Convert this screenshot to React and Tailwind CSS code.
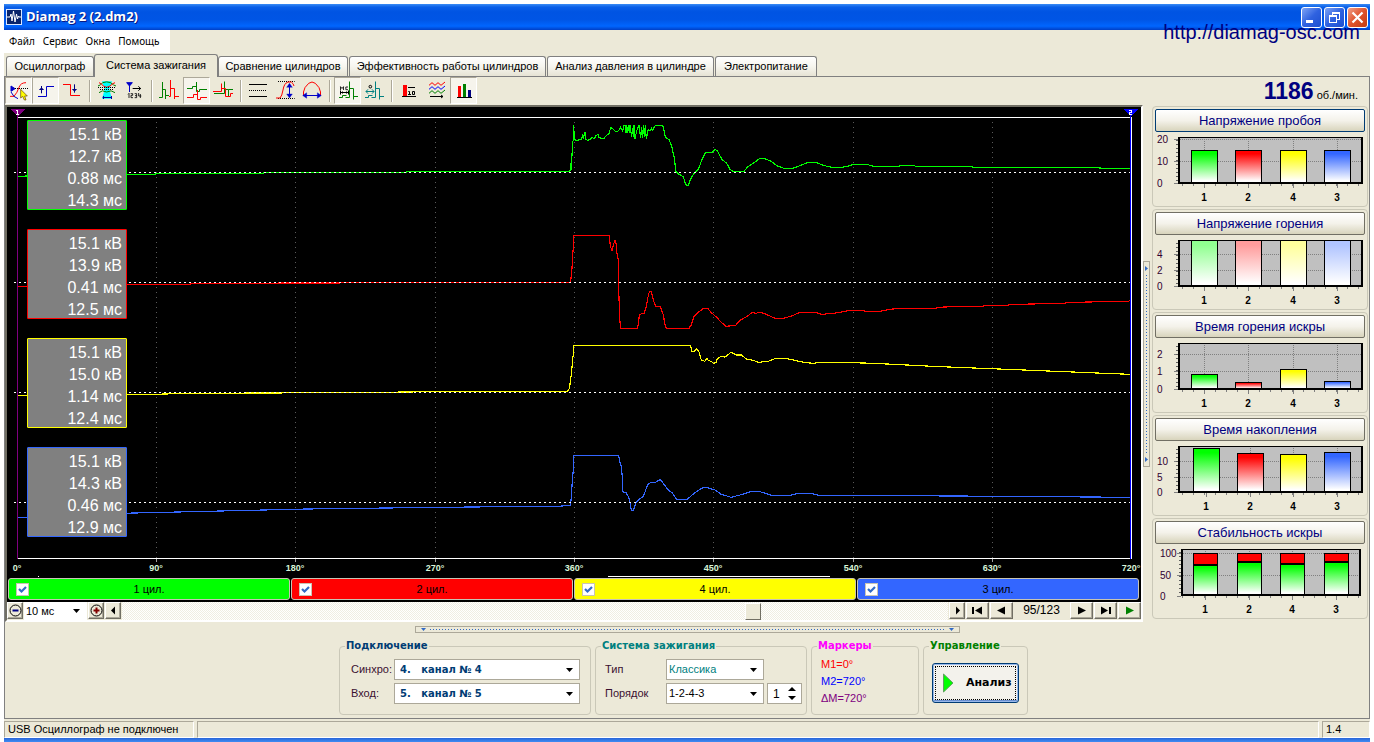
import React from "react";

const raised =
  "border border-t-white border-l-white border-r-[#716f64] border-b-[#716f64] bg-[#ece9d8] shadow-[inset_-1px_-1px_0_#aca899]";

/* ---------- title bar ---------- */

function TitleBar() {
  const base =
    "flex h-[21px] w-[21px] items-center justify-center rounded-[3px] border border-white";
  return (
    <header className="flex h-[26px] items-center bg-[linear-gradient(#3a8cf5_0%,#0a5fe8_12%,#0054e3_30%,#0055e5_60%,#0066ff_85%,#003fc6_100%)] pr-[2px] pl-[2px]">
      <svg className="h-4 w-4" viewBox="0 0 16 16" aria-hidden="true">
        <rect x="0.5" y="0.5" width="15" height="15" fill="#08246b" stroke="#dbe7ff" />
        <path d="M1 8H4L5 5L6 12L7.5 2L9 13L10.5 5L11.5 10L12.5 7L13 8H15" fill="none" stroke="#fff" />
      </svg>
      <h1 className="ml-1 grow font-['Open_Sans','Liberation_Sans',sans-serif] text-[13px] font-bold text-white [text-shadow:1px_1px_0_#0a1883]">
        Diamag 2 (2.dm2)
      </h1>
      <div className="flex gap-[2px]">
        <button aria-label="Свернуть" className={`${base} bg-[linear-gradient(135deg,#7fa4f5,#2f62e0_50%,#1d4fd0)]`}>
          <svg className="h-[19px] w-[19px]" viewBox="0 0 19 19">
            <rect x="4" y="12" width="7" height="3" fill="#fff" />
          </svg>
        </button>
        <button aria-label="Восстановить" className={`${base} bg-[linear-gradient(135deg,#7fa4f5,#2f62e0_50%,#1d4fd0)]`}>
          <svg className="h-[19px] w-[19px]" viewBox="0 0 19 19" fill="none" stroke="#fff" shapeRendering="crispEdges">
            <path d="M7.500 8V4.500H14.500V11.500H12M7 5H15" />
            <path d="M4.500 7.500H11.500V14.500H4.500ZM4 8.500H12" />
          </svg>
        </button>
        <button aria-label="Закрыть" className={`${base} bg-[linear-gradient(135deg,#f0a08a,#e0532c_50%,#c23b12)]`}>
          <svg className="h-[19px] w-[19px]" viewBox="0 0 19 19">
            <path d="M4.500 4.500L14.500 14.500M14.500 4.500L4.500 14.500" stroke="#fff" strokeWidth="2.200" />
          </svg>
        </button>
      </div>
    </header>
  );
}

/* ---------- tabs ---------- */

const TABS = [
  ["Осциллограф", "w-[88px]"],
  ["Система зажигания", "w-[124px]"],
  ["Сравнение цилиндров", "w-[130px]"],
  ["Эффективность работы цилиндров", "w-[197px]"],
  ["Анализ давления в цилиндре", "w-[167px]"],
  ["Электропитание", "w-[102px]"],
];

function Tabs() {
  return (
    <nav className="flex h-[23px] items-end pl-[2px]" role="tablist">
      {TABS.map(([name, width], i) => (
        <button
          key={name}
          role="tab"
          aria-selected={i === 1}
          className={`${width} rounded-t-[3px] border border-b-0 border-[#808080] text-[11px] whitespace-nowrap ${
            i === 1
              ? "relative z-10 -mb-px h-[23px] bg-[#ece9d8] pb-[2px]"
              : "h-[20px] bg-[linear-gradient(#ffffff,#f6f5ee_50%,#e6e3d4)]"
          } ${i > 2 ? "ml-[1px]" : ""}`}
        >
          {name}
        </button>
      ))}
    </nav>
  );
}

/* ---------- toolbar ---------- */

const RED = "#ff0000";
const BLUE = "#0000c8";
const GREEN = "#008000";
const TEAL = "#008080";

/* Icon art is drawn on a sheet with three units to the pixel. */
const ICONS = [
  {
    x: 5,
    label: "Курсор синхронизации",
    on: true,
    art: (
      <>
        <path d="M30 289H42Q52 278 57 262Q62 248 78 248" stroke={RED} />
        <path d="M33 276Q40 292 54 296" stroke={BLUE} />
        <path d="M45 265.500H84" stroke="#000" strokeDasharray="3 3" />
        <path d="M33 258L45 266L33 274Z" fill={BLUE} stroke={BLUE} />
        <path d="M62 268V294L68 289L73 300H78L74 288H82Z" fill="#ffff00" stroke="#604000" strokeWidth="2" />
      </>
    ),
  },
  {
    x: 32,
    label: "Передний фронт",
    on: true,
    art: (
      <>
        <path d="M114 289.500H139.500V259.500H162" stroke={BLUE} />
        <path d="M124.500 280V258M118 268.500H131M121 265.500H128" stroke="#000080" />
      </>
    ),
  },
  {
    x: 59,
    label: "Задний фронт",
    art: (
      <>
        <path d="M189 253.500H211.500V286.500H240" stroke={RED} />
        <path d="M223.500 253V278M217 268.500H230M220 271.500H227" stroke="#000080" />
      </>
    ),
  },
  null,
  {
    x: 94,
    label: "Наложение кадров",
    art: (
      <>
        <path d="M306 244H336L328 268L336 296H306L314 268Z" fill="#00ffff" stroke="none" />
        <path d="M294 258Q302 256 308 248Q320 243 332 248Q340 256 348 258" stroke={GREEN} />
        <path d="M297 248Q304 250 310 258Q320 266 330 258Q338 250 345 248" stroke={RED} />
        <path d="M294 262.500H348M300 268.500H342" stroke="#000" strokeDasharray="3 3" />
        <path d="M297 278Q306 268 320 276Q334 268 345 278" stroke={GREEN} />
        <path d="M308 292.500H336M310.500 288V297M334.500 288V297" stroke="#0000a0" />
      </>
    ),
  },
  {
    x: 121,
    label: "Порядок цилиндров",
    art: (
      <>
        <path d="M380 248H397L388.500 258Z" fill={BLUE} stroke={BLUE} />
        <path d="M388.500 256V276" stroke={BLUE} />
        <path d="M398 265.500H422M415 259L422 265.500L415 272" stroke="#000" />
        <path
          d="M384 283L387 280V294M392 281H398V286H393V293H399M404 281H410V293H404M405 287H410M416 279V288H424M421 282V294"
          stroke="#000"
          strokeWidth="2.500"
        />
      </>
    ),
  },
  null,
  {
    x: 156,
    label: "Парад",
    art: (
      <>
        <path d="M477 292.500H487.500V246M487.500 268.500H496.500V297M496.500 286.500H507" stroke={GREEN} />
        <path d="M507 289.500H511.500V240M511.500 265.500H523.500V297M523.500 289.500H537" stroke={RED} />
      </>
    ),
  },
  {
    x: 183,
    label: "Растр",
    on: true,
    art: (
      <>
        <path d="M561 265.500H577.500V259.500H589.500M589.500 246V274.500H598.500V268.500H621" stroke={GREEN} />
        <path d="M561 292.500H580.500V283.500H592.500M592.500 270V298.500H601.500V292.500H621" stroke={RED} />
      </>
    ),
  },
  {
    x: 210,
    label: "Суперпозиция",
    art: (
      <>
        <path d="M642 280.500H673.500V244.500M673.500 268.500H685.500V289.500M685.500 268.500H699" stroke={GREEN} />
        <path d="M639 274.500H664.500V250.500M664.500 265.500H676.500V289.500H691.500V280.500H699" stroke={RED} />
      </>
    ),
  },
  null,
  {
    x: 245,
    label: "Пределы",
    art: (
      <>
        <path d="M747 253.500H801M747 289.500H801" stroke="#000" />
        <path d="M747 271.500H801" stroke="#000" strokeDasharray="3 3" />
      </>
    ),
  },
  {
    x: 272,
    label: "Масштаб по вертикали",
    art: (
      <>
        <path d="M834 244.500H884M834 295.500H884" stroke="#000" strokeDasharray="3 3" />
        <path d="M828 294H840Q846 288 849 270Q852 250 864 246H874Q880 250 882 258" stroke={RED} />
        <path d="M868.500 254V288" stroke={BLUE} />
        <path d="M860 262L868.500 250L877 262ZM860 282L868.500 294L877 282Z" fill={BLUE} stroke={BLUE} strokeWidth="1" />
      </>
    ),
  },
  {
    x: 299,
    label: "Масштаб по горизонтали",
    art: (
      <>
        <path d="M910.500 288V276Q912 262 926 250L936 246L946 250Q960 262 961.500 276V288" stroke={RED} />
        <path d="M918 286.500H954" stroke={BLUE} />
        <path d="M920 278L908 286.500L920 295ZM952 278L964 286.500L952 295Z" fill={BLUE} stroke={BLUE} strokeWidth="1" />
      </>
    ),
  },
  null,
  {
    x: 334,
    label: "Измерение в миллисекундах",
    on: true,
    art: (
      <>
        <path d="M1017 292.500H1027.500V286.500H1039.500M1036.500 292.500H1048.500V244.500M1048.500 265.500H1060.500V298.500M1060.500 289.500H1074" stroke={GREEN} />
        <path d="M1021.500 277.500H1045.500M1021.500 271.500V283.500M1045.500 271.500V283.500M1027.500 274.500V280.500M1039.500 274.500V280.500" stroke="#000" />
        <path d="M1021.500 270V260L1026 265.500L1030.500 260V270M1044 261H1037.500V269H1044" stroke="#000" strokeWidth="2.500" />
      </>
    ),
  },
  {
    x: 361,
    label: "Измерение в градусах",
    art: (
      <>
        <path d="M1095 292.500H1105.500V286.500H1117.500M1114.500 292.500H1126.500V244.500M1126.500 265.500H1138.500V298.500M1138.500 289.500H1152" stroke={TEAL} />
        <path d="M1098 274.500H1122M1104 268L1098 274.500L1104 281M1116 268L1122 274.500L1116 281" stroke={TEAL} />
        <circle cx="1111" cy="260" r="4" stroke="#000" />
      </>
    ),
  },
  null,
  {
    x: 395,
    label: "Среднее за 10 кадров",
    art: (
      <>
        <rect x="1206" y="255" width="12" height="33" fill={RED} stroke="none" />
        <path d="M1203 289.500H1245M1221 262.500H1242" stroke="#000" />
        <path d="M1222 274.500H1225.500V283.500M1221 283.500H1230M1234.500 274.500H1240.500V283.500H1234.500Z" stroke="#000" />
      </>
    ),
  },
  {
    x: 422,
    label: "Несколько кадров",
    art: (
      <>
        <path d="M1284 256L1293 248L1302 256L1311 248L1320 256L1332 246" stroke={RED} />
        <path d="M1284 268L1293 260L1302 268L1311 260L1320 268L1332 258" stroke="#0000ff" />
        <path d="M1284 280L1293 272L1302 280L1311 272L1320 280L1332 270" stroke={GREEN} />
        <path d="M1287 289.500H1326M1320 285L1326 289.500L1320 294" stroke="#000" />
      </>
    ),
  },
  {
    x: 450,
    label: "Гистограммы",
    on: true,
    art: (
      <>
        <rect x="1374" y="258" width="9" height="33" fill={RED} stroke="none" />
        <rect x="1389" y="252" width="9" height="39" fill={GREEN} stroke="none" />
        <rect x="1404" y="270" width="9" height="21" fill="#000080" stroke="none" />
        <path d="M1371 292.500H1416" stroke="#000" />
      </>
    ),
  },
];

function Toolbar() {
  return (
    <div className="flex h-[28px] items-start">
      <div className="flex" role="toolbar">
        {ICONS.map((icon, i) =>
          icon ? (
            <button
              key={icon.label}
              aria-label={icon.label}
              className={`h-[27px] w-[27px] ${
                icon.on
                  ? "border border-t-[#aca899] border-r-white border-b-white border-l-[#aca899] bg-[#f6f4ec]"
                  : "border border-transparent"
              }`}
            >
              <svg
                className="block h-[25px] w-[25px]"
                viewBox={`${icon.x * 3 + 3} 234 75 75`}
                fill="none"
                strokeWidth="3"
                aria-hidden="true"
              >
                {icon.art}
              </svg>
            </button>
          ) : (
            <span key={i} className="mx-[3px] mt-[3px] h-[22px] w-[2px] border-r border-l border-r-white border-l-[#aca899]" />
          ),
        )}
      </div>
      <output className="ml-auto flex items-baseline gap-[3px] pr-[11px]">
        <b className="text-[23px] leading-7 text-[#000080]">1186</b>
        <span className="text-[11px]">об./мин.</span>
      </output>
    </div>
  );
}

/* ---------- oscillogram ---------- */

const READOUTS = [
  ["border-[#00ff00]", ["15.1 кВ", "12.7 кВ", "0.88 мс", "14.3 мс"]],
  ["border-[#ff0000]", ["15.1 кВ", "13.9 кВ", "0.41 мс", "12.5 мс"]],
  ["border-[#ffff00]", ["15.1 кВ", "15.0 кВ", "1.14 мс", "12.4 мс"]],
  ["border-[#3366ff]", ["15.1 кВ", "14.3 кВ", "0.46 мс", "12.9 мс"]],
];

/* Sample points are in thirds of a pixel. */
const TRACES = [
  {
    color: "#00ff00",
    y: 100,
    points:
      "-1566,229 -1542,229 -1542,226 -1300,223 -1154,223 -1154,220 -830,220 -830,217 -400,217 -400,214 87,214 93,208 93,190 96,166 98,124 101,121 101,76 103,118 108,121 117,120 123,118 126,112 128,102 131,112 135,97 137,118 143,121 150,118 157,112 162,117 168,107 174,103 177,112 183,115 192,115 200,106 207,100 212,83 218,86 228,96 236,92 242,82 248,92 252,77 255,76 258,100 260,76 263,100 265,76 268,100 270,76 275,110 278,85 281,110 282,76 285,118 290,92 297,76 302,113 305,80 308,113 310,76 313,110 316,76 319,118 325,88 330,93 335,85 338,90 346,76 368,76 372,90 376,112 388,120 396,142 402,170 408,214 416,222 430,230 436,250 440,256 445,256 450,242 458,226 468,214 476,206 486,178 496,158 516,158 525,148 533,154 545,177 560,190 570,208 578,214 612,214 624,200 645,186 658,176 670,175 690,182 712,198 732,205 758,205 780,197 805,187 828,187 850,196 862,199 877,202 904,202 922,199 940,193 980,193 1000,199 1078,199 1080,196 1124,196 1126,199 1298,199 1298,202 1680,202 1680,205 1770,205",
  },
  {
    color: "#ff0000",
    y: 100,
    points:
      "-1566,559 -1540,559 -1300,553 -1050,553 -1045,550 -680,549 0,547 90,547 93,535 96,505 98,463 101,435 101,406 208,406 211,440 216,451 221,432 225,421 228,430 231,460 235,482 236,565 239,655 242,685 293,685 296,660 299,643 312,640 319,620 323,595 328,575 334,575 340,600 347,620 361,620 370,645 376,680 379,685 447,685 453,676 462,650 475,637 490,625 503,625 513,637 530,652 543,666 558,679 587,676 600,661 620,650 637,637 648,640 658,637 672,640 690,648 705,655 730,655 755,648 780,637 825,637 845,643 880,640 900,637 915,634 932,631 970,631 974,634 1020,634 1048,628 1085,625 1188,625 1190,622 1242,620 1330,619 1332,616 1405,616 1408,613 1485,612 1488,610 1575,610 1578,607 1655,606 1658,604 1765,604 1770,601",
  },
  {
    color: "#ffff00",
    y: 330,
    points:
      "-1566,196 -1540,196 -1300,193 -1160,193 -1050,190 -600,188 -300,185 82,184 88,175 92,150 95,122 98,88 101,65 101,46 451,46 456,64 462,64 470,57 477,66 484,90 494,94 501,86 506,92 514,94 520,100 528,97 532,86 542,80 555,81 573,67 590,75 605,75 620,88 640,91 655,97 685,94 705,86 740,86 765,91 795,98 825,100 828,97 900,97 1000,100 1200,110 1500,122 1770,133",
  },
  {
    color: "#3366ff",
    y: 330,
    points:
      "-1566,562 -1540,562 -1300,551 -1000,544 -700,537 -300,532 0,529 55,529 92,526 94,495 98,440 101,410 101,376 236,376 239,395 244,410 247,443 249,486 258,488 265,500 270,516 274,541 280,541 288,518 300,506 310,500 322,466 332,457 346,457 361,449 370,460 385,480 398,490 410,508 442,508 460,492 480,478 492,472 505,474 525,480 542,492 573,502 600,495 632,485 660,485 695,496 750,496 775,490 810,490 838,496 900,496 1400,499 1770,502",
  },
];

const DEGREES = [17, 156, 295, 435, 574, 713, 853, 992, 1131];

function Oscillogram() {
  return (
    <div className="relative">
      <svg className="block h-auto w-full bg-black" viewBox="7 107 1134 471" role="img" aria-label="Осциллограмма">
        <g shapeRendering="crispEdges" fill="none">
          {DEGREES.slice(1, -1).map((x) => (
            <g key={x}>
              <path d={`M${x + 0.5} 122V558`} stroke="#5a5a5a" strokeDasharray="1 4" />
              <path d={`M${x + 0.5} 559V562`} stroke="#a0a0a0" />
            </g>
          ))}
          {TRACES.map((t) => (
            <polyline
              key={t.color}
              points={t.points}
              transform={`translate(540 ${t.y}) scale(0.33333)`}
              stroke={t.color}
              strokeWidth="3.500"
            />
          ))}
          {[172.5, 282.5, 392.5, 502.5].map((y) => (
            <path key={y} d={`M14 ${y}H1130`} stroke="#fff" strokeDasharray="2 3" />
          ))}
          <path d="M17 117.500H1131M17 558.500H1131M1131.500 117V559M608 576.500H830M38 576.500H39" stroke="#fff" />
          <path d="M17.500 114V559" stroke="#800080" />
          <path d="M1130.500 114V559" stroke="#0000ff" />
          <path d="M10 109H25L18 116H17Z" fill="#800080" />
          <path d="M1123 109H1138L1131 116H1130Z" fill="#0000ff" />
          <path d="M16 110.500H18M17.500 110V114M16 114.500H19" stroke="#fff" />
          <path d="M1129 110.500H1132M1131.500 110V113M1129 112.500H1132M1129.500 112V115M1129 114.500H1132" stroke="#fff" />
        </g>
        <g fill="#d8f5d8" fontSize="9" fontWeight="bold" textAnchor="middle">
          {DEGREES.map((x, i) => (
            <text key={x} x={x} y="571">
              {i * 90}°
            </text>
          ))}
        </g>
      </svg>
      <div className="absolute top-[13px] left-[20px] flex w-[100px] flex-col gap-[19px]">
        {READOUTS.map(([border, values]) => (
          <ul key={border} className={`h-[90px] rounded-[1px] border bg-[#808080] pt-[3px] pr-[4px] text-right text-[16px] leading-[22px] text-white ${border}`}>
            {values.map((v) => (
              <li key={v}>{v}</li>
            ))}
          </ul>
        ))}
      </div>
    </div>
  );
}

const CHANNELS = [
  ["1 цил.", "bg-[#00ff00]"],
  ["2 цил.", "bg-[#ff0000]"],
  ["4 цил.", "bg-[#ffff00]"],
  ["3 цил.", "bg-[#3366ff]"],
];

function Channels() {
  return (
    <div className="flex gap-[1px] bg-black pr-[2px] pb-[2px] pl-[1px]">
      {CHANNELS.map(([name, color]) => (
        <label
          key={name}
          className={`grid h-[22px] flex-1 grid-cols-[1fr_auto_1fr] items-center rounded-[3px] border border-[#c8c4b4] px-[7px] text-[11px] ${color}`}
        >
          <span className="grid w-[13px]">
            <input
              type="checkbox"
              defaultChecked
              className="peer col-start-1 row-start-1 h-[13px] w-[13px] appearance-none border border-[#c8c4b4] bg-white"
            />
            <svg
              className="pointer-events-none invisible col-start-1 row-start-1 h-[13px] w-[13px] peer-checked:visible"
              viewBox="0 0 13 13"
              aria-hidden="true"
            >
              <path d="M3 6L5.500 8.500L10 4" fill="none" stroke="#316ac5" strokeWidth="2.200" />
            </svg>
          </span>
          {name}
        </label>
      ))}
    </div>
  );
}

function NavButton({ label, width, children }) {
  return (
    <button aria-label={label} className={`flex h-[17px] items-center justify-center ${width} ${raised}`}>
      <svg className="h-[13px] w-[13px] shrink-0" viewBox="0 -1 13 13" aria-hidden="true">
        {children}
      </svg>
    </button>
  );
}

function FrameBar() {
  return (
    <div className="flex h-[18px] items-start gap-[1px] bg-[#ece9d8]">
      <NavButton label="Сжать" width="w-[16px]">
        <circle cx="6.500" cy="5.500" r="5.500" fill="none" stroke="#000" />
        <path d="M3.500 5.500H9.500" stroke="#000080" strokeWidth="2" />
      </NavButton>
      <div className="flex h-[18px] w-[63px] items-center bg-white">
        <select aria-label="Развёртка" className="h-[18px] w-full appearance-none bg-white pl-[2px] text-[11px] leading-[16px] outline-none">
          <option>10 мс</option>
        </select>
        <Arrow />
      </div>
      <NavButton label="Растянуть" width="w-[16px]">
        <circle cx="6.500" cy="5.500" r="5.500" fill="none" stroke="#000" />
        <path d="M3.500 5.500H9.500M6.500 2.500V8.500" stroke="#800000" strokeWidth="2" />
      </NavButton>
      <NavButton label="Назад" width="w-[16px]">
        <path d="M8 1.500V9.500L4 5.500Z" fill="#000" />
      </NavButton>
      <input
        type="range"
        aria-label="Положение"
        min="0"
        max="1000"
        defaultValue="769"
        className="h-[18px] min-w-0 grow appearance-none bg-[repeating-conic-gradient(#ffffff_0_25%,#f0eee2_0_50%)] bg-[length:2px_2px] [&::-webkit-slider-thumb]:h-[17px] [&::-webkit-slider-thumb]:w-[16px] [&::-webkit-slider-thumb]:appearance-none [&::-webkit-slider-thumb]:border [&::-webkit-slider-thumb]:border-t-white [&::-webkit-slider-thumb]:border-r-[#716f64] [&::-webkit-slider-thumb]:border-b-[#716f64] [&::-webkit-slider-thumb]:border-l-white [&::-webkit-slider-thumb]:bg-[#ece9d8]"
      />
      <NavButton label="Вперёд" width="w-[16px]">
        <path d="M5 1.500V9.500L9 5.500Z" fill="#000" />
      </NavButton>
      <NavButton label="Первый кадр" width="w-[23px]">
        <path d="M1 2H3V9H1ZM11 1.500V9.500L4 5.500Z" fill="#000" />
      </NavButton>
      <NavButton label="Предыдущий кадр" width="w-[23px]">
        <path d="M10 1.500V9.500L2 5.500Z" fill="#000" />
      </NavButton>
      <span className="w-[55px] text-center text-[12px] leading-[17px]">95/123</span>
      <NavButton label="Следующий кадр" width="w-[23px]">
        <path d="M3 1.500V9.500L11 5.500Z" fill="#000" />
      </NavButton>
      <NavButton label="Последний кадр" width="w-[23px]">
        <path d="M2 1.500V9.500L9 5.500ZM10 2H12V9H10Z" fill="#000" />
      </NavButton>
      <NavButton label="Воспроизвести" width="w-[23px]">
        <path d="M3 1.500V9.500L11 5.500Z" fill="#008000" />
      </NavButton>
    </div>
  );
}

/* ---------- histograms ---------- */

const C = { g: "#00ff00", r: "#ff0000", y: "#ffff00", b: "#3366ff" };
const COLORS = [C.g, C.r, C.y, C.b];
const PALE = ["#90ff90", "#ff9c9c", "#ffff9c", "#b0c4ff"];

const CHARTS = [
  {
    id: "breakdown",
    title: "Напряжение пробоя",
    focus: true,
    scale: [["20", 7], ["10", 29], ["0", 51]],
    bars: [[49, 18], [93, 18], [138, 18], [182, 18]],
  },
  {
    id: "burn",
    title: "Напряжение горения",
    colors: PALE,
    scale: [["4", 19], ["2", 35], ["0", 51]],
    bars: [[49, 5], [93, 5], [138, 5], [182, 5]],
    rulers: false,
  },
  {
    id: "time",
    title: "Время горения искры",
    scale: [["2", 16], ["1", 33], ["0", 51]],
    bars: [[49, 36], [93, 44], [138, 31], [182, 43]],
  },
  {
    id: "dwell",
    title: "Время накопления",
    scale: [["10", 20], ["5", 36], ["0", 51]],
    bars: [[51, 7], [95, 12], [138, 13], [182, 11]],
  },
  {
    id: "stability",
    title: "Стабильность искры",
    colors: [C.g, C.g, C.g, C.g],
    inset: 3,
    scale: [["100", 9], ["50", 31], ["0", 52]],
    bars: [[50, 20, 9], [94, 17, 9], [137, 19, 9], [181, 17, 9]],
  },
];

function Histogram({ id, title, focus, scale, bars, colors = COLORS, inset = 0, rulers = true }) {
  const left = 23 + inset;
  const right = 208 - (inset ? 2 : 0);
  const half = inset ? 12 : 13;
  const minor = Array.from({ length: 17 }, (_, i) => 27.5 + i * 11).filter((x) => x < right);
  return (
    <section className="rounded-[4px] border border-[#cac8b8] p-[2px] pb-0">
      <button
        className={`block h-[23px] w-full rounded-[2px] border bg-[linear-gradient(#ffffff,#f4f2ea_50%,#d8d4bc)] text-[13px] leading-[20px] text-[#000080] ${
          focus ? "border-[#003c74]" : "border-[#716f64]"
        }`}
      >
        {title}
      </button>
      <svg className="block h-auto w-full" viewBox="0 0 210 74" role="img" aria-label={title}>
        <defs>
          {colors.map((c, i) => (
            <linearGradient key={i} id={`${id}-${i}`} x1="0" y1="0" x2="0" y2="1">
              <stop offset="0" stopColor={c} />
              <stop offset="0.100" stopColor={c} />
              <stop offset="0.950" stopColor="#fff" />
            </linearGradient>
          ))}
        </defs>
        <g shapeRendering="crispEdges" fill="none">
          <rect x={left} y="5" width={right - left} height="46" fill="#c0c0c0" />
          {scale.slice(0, 2).map(([n, y]) => (
            <path key={n} d={`M${left} ${y + 0.5}H${right}`} stroke="#808080" strokeDasharray="1 1" />
          ))}
          {rulers &&
            bars.map(([x]) => (
              <path key={x} d={`M${x + 0.5} 5V51`} stroke="#808080" strokeDasharray="1 1" />
            ))}
          {scale.map(([n, y]) => (
            <path key={n} d={`M${left - 4} ${y + 0.5}H${left}`} stroke="#808080" />
          ))}
          {minor.map((x) => (
            <path key={x} d={`M${x} 52V54`} stroke="#808080" />
          ))}
          <path d={`M${left - 1} 8V50`} stroke="#606060" strokeDasharray="1 3" strokeWidth="2" />
          {bars.map(([x, y, top], i) => (
            <g key={x}>
              <path d={`M${x + 0.5} 52V56`} stroke="#808080" />
              <rect x={x - half + 0.5} y={y + 0.5} width={half * 2} height={50 - y} fill={`url(#${id}-${i})`} stroke="#000" />
              {top && <rect x={x - half + 0.5} y={top + 0.5} width={half * 2} height={y - top} fill={C.r} stroke="#000" />}
              {top && <path d={`M${x - half} ${y + 1}H${x + half + 1}`} stroke="#000" strokeWidth="2" />}
            </g>
          ))}
          <path d={`M${left} 5.500H${right}`} stroke="#000" />
          <path d={`M${left + 1} 5V52M${left} 51H${right}M${right - 1} 5V52`} stroke="#000" strokeWidth="2" />
        </g>
        <g fontSize="10" fill="#300030">
          {scale.map(([n, y]) => (
            <text key={n} x={2 + inset} y={y + 4}>
              {n}
            </text>
          ))}
        </g>
        <g fontSize="10" fontWeight="bold" textAnchor="middle">
          {["1", "2", "4", "3"].map((n, i) => (
            <text key={n} x={bars[i][0]} y="69">
              {n}
            </text>
          ))}
        </g>
      </svg>
    </section>
  );
}

/* ---------- bottom panels ---------- */

function Arrow() {
  return (
    <svg className="pointer-events-none -ml-[14px] h-[4px] w-[7px] shrink-0" viewBox="0 0 7 4" aria-hidden="true">
      <path d="M0 0H7L3.500 4Z" fill="#000" />
    </svg>
  );
}

function Select({ id, text, children }) {
  return (
    <span className="flex h-[21px] w-full items-center">
      <select id={id} className={`h-full w-full appearance-none border border-[#aca899] bg-white outline-none ${text}`}>
        <option>{children}</option>
      </select>
      <Arrow />
    </span>
  );
}

function Panel({ title, color, width, children }) {
  return (
    <fieldset className={`rounded-[4px] border border-[#cac8b8] pt-[7px] pb-[7px] ${width}`}>
      <legend className={`ml-[5px] px-[1px] font-['DejaVu_Sans','Liberation_Sans',sans-serif] text-[10px] leading-[12px] font-bold ${color}`}>
        {title}
      </legend>
      {children}
    </fieldset>
  );
}

function Panels() {
  const label = "text-[11px] text-[#3a1030]";
  const channel = "pl-[5px] font-['DejaVu_Sans','Liberation_Sans',sans-serif] text-[10px] font-bold text-[#003c74]";
  return (
    <div className="flex justify-center gap-[4px] pr-[7px] pb-[3px]">
      <Panel title="Подключение" color="text-[#003c74]" width="w-[252px]">
        <div className="grid grid-cols-[auto_186px] items-center gap-y-[3px] pr-[10px] pl-[11px]">
          <label htmlFor="sync" className={label}>Синхро:</label>
          <Select id="sync" text={channel}>{"4.\u00a0\u00a0\u00a0канал № 4"}</Select>
          <label htmlFor="input" className={label}>Вход:</label>
          <Select id="input" text={channel}>{"5.\u00a0\u00a0\u00a0канал № 5"}</Select>
        </div>
      </Panel>
      <Panel title="Система зажигания" color="text-[#008080]" width="w-[212px]">
        <div className="grid grid-cols-[61px_98px_38px] items-center gap-y-[3px] pl-[9px]">
          <label htmlFor="type" className={label}>Тип</label>
          <Select id="type" text="pl-[2px] text-[11px] text-[#008080]">Классика</Select>
          <span />
          <label htmlFor="order" className={label}>Порядок</label>
          <Select id="order" text="pl-[2px] text-[11px]">1-2-4-3</Select>
          <span className="ml-[3px] flex h-[21px] items-center border border-[#aca899] bg-white pr-[5px]">
            <input aria-label="Номер" defaultValue="1" className="w-full min-w-0 pl-[5px] text-[12px] outline-none" />
            <svg className="h-[13px] w-[8px] shrink-0" viewBox="0 0 8 13" aria-hidden="true">
              <path d="M0 4L4 0L8 4ZM0 9L4 13L8 9Z" fill="#000" />
            </svg>
          </span>
        </div>
      </Panel>
      <Panel title="Маркеры" color="text-[#ff00ff]" width="w-[108px]">
        <div className="-mt-[3px] flex flex-col pl-[9px] text-[11px] leading-[17px]">
          <span className="text-[#ff0000]">M1=0°</span>
          <span className="text-[#0000ff]">M2=720°</span>
          <span className="text-[#800080]">ΔM=720°</span>
        </div>
      </Panel>
      <Panel title="Управление" color="text-[#008000]" width="w-[105px]">
        <button className="mt-[4px] ml-[8px] flex h-[40px] w-[87px] items-center rounded-[3px] border border-[#003c74] bg-[#f3f2ec] p-[2px] font-['DejaVu_Sans','Liberation_Sans',sans-serif] text-[11px] font-bold shadow-[inset_0_0_0_1px_#98b8ea,inset_0_-2px_0_#6a8fd0]">
          <span className="flex h-full w-full items-center gap-[12px] border border-dotted border-black pl-[6px]">
            <svg className="h-[20px] w-[12px]" viewBox="0 0 12 20" aria-hidden="true">
              <path d="M1.500 1L11 10L1.500 19Z" fill="#00ff00" stroke="#60a060" />
            </svg>
            Анализ
          </span>
        </button>
      </Panel>
    </div>
  );
}

function SplitArrow({ vertical }) {
  return (
    <svg className="h-[5px] w-[5px] shrink-0" viewBox="0 0 5 5" aria-hidden="true">
      <path d={vertical ? "M1 0L4 2.500L1 5Z" : "M0 1H5L2.500 4Z"} fill="#316ac5" />
    </svg>
  );
}

export default function App() {
  return (
    <div className="flex min-h-screen flex-col bg-white px-[4px] pt-[4px] font-['Liberation_Sans',Arial,sans-serif] text-black">
      <div className="relative flex grow flex-col bg-[#ece9d8]">
        <TitleBar />
        <a href="http://diamag-osc.com" className="absolute top-[16px] right-[10px] z-20 text-[20px] leading-[24px] text-[#000080]">
          http://diamag-osc.com
        </a>
        <div className="flex h-[23px] w-[166px] items-center gap-[8px] bg-white pl-[5px] font-['Noto_Sans','Liberation_Sans',sans-serif] text-[10px]" role="menubar">
          {["Файл", "Сервис", "Окна", "Помощь"].map((m) => (
            <button key={m} role="menuitem">{m}</button>
          ))}
        </div>
        <Tabs />
        <main className="flex grow flex-col border border-[#808080]">
          <Toolbar />
          <div className="flex">
            <div className="min-w-0 grow border-2 border-t-[#716f64] border-r-white border-b-white border-l-[#716f64]">
              <Oscillogram />
              <Channels />
              <FrameBar />
            </div>
            <div className="flex h-[206px] w-[7px] flex-col items-center justify-between self-center border border-[#aca899] py-[4px]">
              <SplitArrow vertical />
              <span className="my-[4px] w-px grow bg-[repeating-linear-gradient(#316ac5_0_1px,transparent_1px_3px)]" />
              <SplitArrow vertical />
            </div>
            <aside className="mt-[1px] mr-[1px] ml-[2px] flex w-[216px] shrink-0 flex-col gap-[2px]">
              {CHARTS.map((c) => (
                <Histogram key={c.id} {...c} />
              ))}
            </aside>
          </div>
          <div className="mt-[4px] mb-[7px] flex h-[7px] w-[545px] items-center self-center border border-[#aca899] px-[5px]">
            <SplitArrow />
            <span className="mx-[4px] h-px grow bg-[repeating-linear-gradient(90deg,#316ac5_0_1px,transparent_1px_3px)]" />
            <SplitArrow />
          </div>
          <Panels />
        </main>
        <footer className="flex h-[19px] gap-[3px] pt-[2px] text-[11px] leading-[15px]">
          <span className="w-[190px] border border-t-[#aca899] border-r-white border-b-white border-l-[#aca899] pl-[3px] whitespace-nowrap">
            USB Осциллограф не подключен
          </span>
          <span className="grow border border-t-[#aca899] border-r-white border-b-white border-l-[#aca899]" />
          <span className="w-[48px] border border-t-[#aca899] border-r-white border-b-white border-l-[#aca899] pl-[3px]">1.4</span>
        </footer>
        <div className="h-[4px] bg-[linear-gradient(#2a66d8,#3f8cf3)]" />
      </div>
    </div>
  );
}
